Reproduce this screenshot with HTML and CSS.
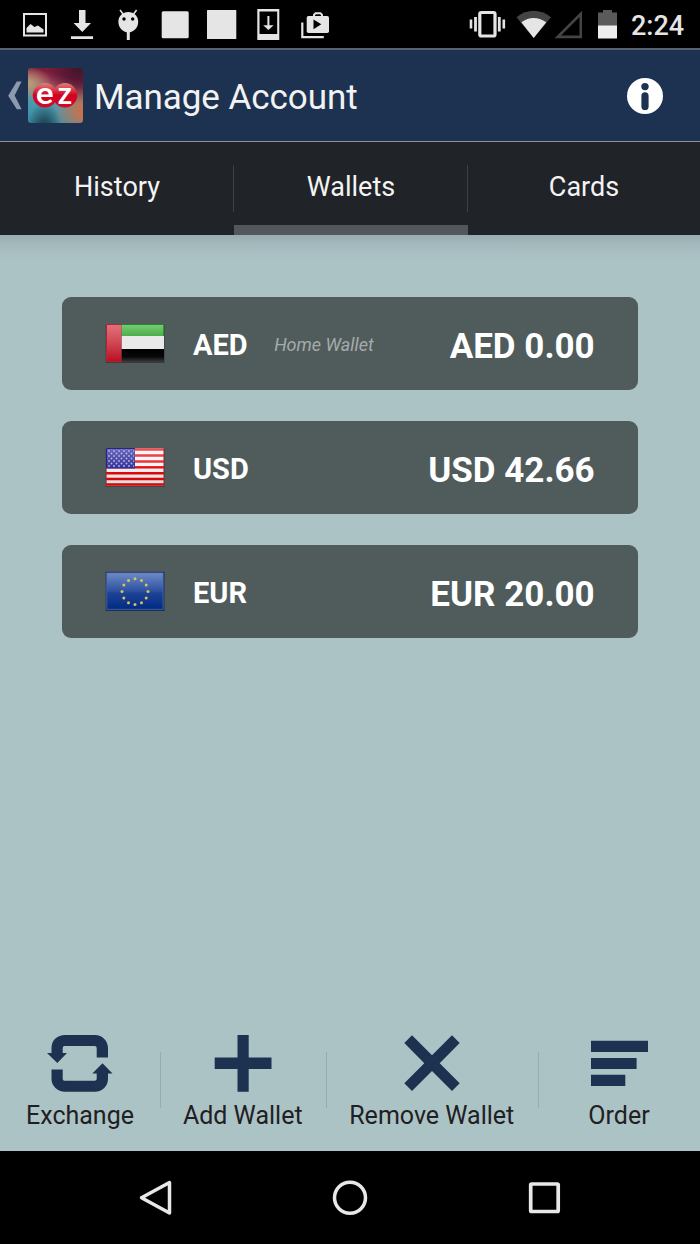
FILE: index.html
```html
<!DOCTYPE html>
<html lang="en">
<head>
<meta charset="utf-8">
<title>Manage Account</title>
<link rel="stylesheet" href="styles.css">
</head>
<body>
<div class="screen">
  <div class="status">
    <svg width="59" height="48" viewBox="0 0 59 48"><rect x="24" y="14" width="22" height="21.500" fill="none" stroke="#e5e5e5" stroke-width="2"/><path d="M26.500 32.500V28l4-4 4 3 3.500-1.500 5.500 4v3z" fill="#e5e5e5"/></svg>
    <svg width="47" height="48" viewBox="59 0 47 48"><path d="M79 10h6.500v13h5.500l-8.700 9-8.800-9H79zM71 36.200h22V39H71z" fill="#e5e5e5"/></svg>
    <svg width="44" height="48" viewBox="106 0 44 48"><path d="M128.300 12c5.600 0 9.900 4 9.900 9.700 0 6-4.400 10.600-9.900 10.600s-9.900-4.600-9.900-10.600c0-5.700 4.300-9.700 9.900-9.700z" fill="#e5e5e5"/><path d="M123 14l-3-4M133.600 14l3-4" stroke="#e5e5e5" stroke-width="1.500"/><path d="M128.300 32v8" stroke="#e5e5e5" stroke-width="3"/><circle cx="124" cy="19" r="1.700"/><circle cx="132.700" cy="19" r="1.700"/></svg>
    <svg width="48" height="48" viewBox="150 0 48 48"><rect x="161.700" y="11.200" width="27" height="27" rx="1.500" fill="#e5e5e5"/></svg>
    <svg width="49" height="48" viewBox="198 0 49 48"><rect x="207" y="10" width="29.300" height="29" rx=".5" fill="#e5e5e5"/></svg>
    <svg width="43" height="48" viewBox="247 0 43 48"><path fill-rule="evenodd" d="M257.300 9h22v31h-22zM259.500 11.500V34h17.700V11.500z" fill="#e5e5e5"/><path d="M267.400 16h2v9.300h4.200l-5.200 4.700-5.200-4.700h4.200z" fill="#e5e5e5"/></svg>
    <svg width="50" height="48" viewBox="290 0 50 48"><path d="M302.300 22.500v14.600h21.500" fill="none" stroke="#e5e5e5" stroke-width="2.200"/><rect x="306.700" y="16" width="22.300" height="17" rx="1.800" fill="#e5e5e5"/><path d="M314 17v-2.200l1.500-1.500h5l1.500 1.500V17" fill="none" stroke="#e5e5e5" stroke-width="2"/><path d="M313.500 19.500v9.700l7.800-4.900z"/></svg>
    <svg class="right" width="50" height="48" viewBox="460 0 50 48"><rect x="479.800" y="12.500" width="15.200" height="23.500" rx="1.500" fill="none" stroke="#e5e5e5" stroke-width="3.200"/><path d="M475.500 17v14.500M499.300 17v14.500" stroke="#e5e5e5" stroke-width="2.800"/><path d="M471 19.500v9M503.800 19.500v9" stroke="#e5e5e5" stroke-width="2.600"/></svg>
    <svg width="43" height="48" viewBox="510 0 43 48"><path d="M516.500 17.200Q533.500 4.500 551 17.200L533.700 38z" fill="#444"/><path d="M521.300 22.300Q533.500 13.500 546.300 22.300L533.700 38z" fill="#e5e5e5"/></svg>
    <svg width="37" height="48" viewBox="553 0 37 48"><path fill-rule="evenodd" d="M554.500 38.200L582 10.700v27.500zM561 35.600h18.500V17z" fill="#444"/></svg>
    <svg width="34" height="48" viewBox="590 0 34 48"><path d="M598 26V12.500h5V10h9v2.500h5V26z" fill="#5a5a5a"/><path d="M598 25.500h19v13h-19z" fill="#eee"/></svg>
    <span class="clock">2:24</span>
  </div>

  <header class="header">
    <svg class="back" width="28" height="92" viewBox="0 0 28 92"><path d="M16.800 31.500h4.800l-7 14 7 13.700h-4.800L8.200 45.800z" fill="#8c9aae"/></svg>
    <div class="logo"><svg width="55" height="55" viewBox="0 0 55 55">
      <defs><linearGradient id="ball" x1="0" y1="0" x2="0" y2="1"><stop offset="0" stop-color="#dc7f7c"/><stop offset=".35" stop-color="#d5283c"/><stop offset=".5" stop-color="#d0021f"/><stop offset="1" stop-color="#d3082a"/></linearGradient></defs>
      <circle cx="37" cy="27.300" r="12.200" fill="url(#ball)"/><circle cx="17" cy="27.300" r="12.200" fill="url(#ball)"/>
      <text transform="translate(16.800 35.500) scale(1.150 1)" class="logo-letter" text-anchor="middle">e</text><text x="36.700" y="35.500" class="logo-letter" text-anchor="middle">z</text>
    </svg></div>
    <h1 class="title">Manage Account</h1>
    <svg class="info" width="36" height="36" viewBox="0 0 36 36"><circle cx="18" cy="18" r="18" fill="#fff"/><circle cx="18" cy="8.600" r="3.700" fill="#1c3250"/><rect x="14.400" y="14.300" width="7.200" height="17.700" rx="3.600" fill="#1c3250"/></svg>
  </header>

  <nav class="tabs">
    <div class="tab">History</div>
    <div class="tab active">Wallets</div>
    <div class="tab">Cards</div>
  </nav>

  <main class="content">
    <div class="wallet">
      <svg class="flag" width="60" height="41" viewBox="0 0 60 41">
        <defs>
          <linearGradient id="red" x1="0" y1="0" x2="0" y2="1"><stop offset="0" stop-color="#e2717a"/><stop offset=".5" stop-color="#cf4653"/><stop offset="1" stop-color="#b90d20"/></linearGradient>
          <linearGradient id="green" x1="0" y1="0" x2="0" y2="1"><stop offset="0" stop-color="#7acb78"/><stop offset="1" stop-color="#4cae4b"/></linearGradient>
          <linearGradient id="black" x1="0" y1="0" x2="0" y2="1"><stop offset="0" stop-color="#000"/><stop offset=".6" stop-color="#080808"/><stop offset="1" stop-color="#3c3c3c"/></linearGradient>
        </defs>
        <rect x=".7" y="1" width="58.800" height="39" fill="#333d3d"/>
        <path d="M16.500 1.500H59V13H16.500z" fill="url(#green)"/><path d="M16.500 13H59v13H16.500z" fill="#e9e9e9"/><path d="M16.500 26H59v13H16.500z" fill="url(#black)"/><path d="M1 1.500h15.500V39H1z" fill="url(#red)"/>
        <path d="M16.500 1.500H58.700V13" fill="none" stroke="#208c25"/><path d="M16.500 1.500H1.500V38.700h15" fill="none" stroke="#b32435"/>
      </svg>
      <span class="code">AED</span><span class="home">Home Wallet</span><span class="amount">AED 0.00</span>
    </div>
    <div class="wallet">
      <svg class="flag" width="60" height="41" viewBox="0 0 60 41">
        <defs>
          <pattern id="stars" width="5" height="5" patternUnits="userSpaceOnUse"><circle cx="1.500" cy="1.500" r=".9" fill="#b9b9e2"/><circle cx="4" cy="4" r=".9" fill="#b9b9e2"/></pattern>
          <linearGradient id="canton" x1="0" y1="0" x2="0" y2="1"><stop offset="0" stop-color="#6a69bb"/><stop offset="1" stop-color="#30309b"/></linearGradient>
          <linearGradient id="gloss" x1="0" y1="0" x2="0" y2="1"><stop offset="0" stop-color="#fff" stop-opacity=".3"/><stop offset=".5" stop-color="#fff" stop-opacity=".12"/><stop offset=".52" stop-color="#000" stop-opacity=".02"/><stop offset="1" stop-color="#000" stop-opacity=".12"/></linearGradient>
        </defs>
        <rect x=".7" y="1" width="58.800" height="39" fill="#4b3f40"/>
        <path d="M1 1.300h58V39H1z" fill="#f5f5f5"/>
        <path d="M1 2.600h58M1 8.500h58M1 14.400h58M1 20.300h58M1 26.200h58M1 31.900h58M1 37.500h58" stroke="#e9080c" stroke-width="2.500"/>
        <path d="M1 1.300h58V39H1z" fill="url(#gloss)"/>
        <path d="M1 1.300h29V21.500H1z" fill="url(#canton)"/><path d="M2 2h27v18H2z" fill="url(#stars)"/>
        <path d="M30 1.500H1.500V21" fill="none" stroke="#292489"/><path d="M1.500 22v17M58.700 1.500V39" stroke="#b5242a" stroke-opacity=".65"/>
      </svg>
      <span class="code">USD</span><span class="amount">USD 42.66</span>
    </div>
    <div class="wallet">
      <svg class="flag" width="60" height="41" viewBox="0 0 60 41">
        <defs><linearGradient id="blue" x1="0" y1="0" x2="0" y2="1"><stop offset="0" stop-color="#6f8ac6"/><stop offset=".5" stop-color="#2c51a0"/><stop offset=".55" stop-color="#1e4395"/><stop offset="1" stop-color="#002b84"/></linearGradient></defs>
        <rect x=".7" y=".8" width="58.800" height="39.200" fill="#19305f"/>
        <path d="M1.800 1.900h56.300v36.400H1.800z" fill="url(#blue)" stroke="#5872b4" stroke-width=".7"/>
        <g fill="#d7c45a"><circle cx="30" cy="7.700" r="1.500"/><circle cx="36.500" cy="9.400" r="1.500"/><circle cx="41.200" cy="14.100" r="1.500"/><circle cx="43" cy="20.500" r="1.500"/><circle cx="41.200" cy="27" r="1.500"/><circle cx="36.500" cy="31.700" r="1.500"/><circle cx="30" cy="33.400" r="1.500"/><circle cx="23.500" cy="31.700" r="1.500"/><circle cx="18.800" cy="27" r="1.500"/><circle cx="17" cy="20.500" r="1.500"/><circle cx="18.800" cy="14.100" r="1.500"/><circle cx="23.500" cy="9.400" r="1.500"/></g>
      </svg>
      <span class="code">EUR</span><span class="amount">EUR 20.00</span>
    </div>
  </main>

  <div class="actions">
    <div class="action exchange">
      <svg width="66" height="58" viewBox="0 0 66 58"><path d="M4.500 19V14C4.500 6 10.500 1 18 1H48C55.500 1 61 7 61 14V23.500H49.700V14Q49.700 12 47.700 12H17.500Q15.700 12 15.700 14V19H20L10.300 29 0 19zM4.500 35.500H15.700V45Q15.700 46.700 17.500 46.700H47.700Q49.700 46.700 49.700 45V39.500H45.300L55.500 29.300 65.500 39.500H61V45C61 52 55.500 57.700 48 57.700H18C10.500 57.700 4.500 52 4.500 45z" fill="#1c3250"/></svg>
      <span>Exchange</span>
    </div>
    <div class="action add">
      <svg width="58" height="58" viewBox="0 0 58 58"><path d="M23.500 1H34.700V23.500H57.500V35H34.700V57.700H23.500V35H.7V23.500H23.500z" fill="#1c3250"/></svg>
      <span>Add Wallet</span>
    </div>
    <div class="action remove">
      <svg width="58" height="58" viewBox="0 0 58 58"><path d="M9 1.200L29 21.300 49 1.200 56.700 9 36.700 29.200 56.700 49.300 49 57 29 37 9 57 1.300 49.300 21.300 29.200 1.300 9z" fill="#1c3250"/></svg>
      <span>Remove Wallet</span>
    </div>
    <div class="action order">
      <svg width="58" height="58" viewBox="0 0 58 58"><path d="M1 6.700H58V18H1zM1 24H46.600V35H1zM1 40.700H35.300V52H1z" fill="#1c3250"/></svg>
      <span>Order</span>
    </div>
  </div>

  <div class="navbar">
    <svg width="40" height="40" viewBox="0 0 40 40"><path d="M33.500 4.500V35L5.500 19.700z" fill="none" stroke="#e8e8e8" stroke-width="3.500" stroke-linejoin="round"/></svg>
    <svg width="40" height="40" viewBox="0 0 40 40"><circle cx="20" cy="19.700" r="15.500" fill="none" stroke="#e8e8e8" stroke-width="3.500"/></svg>
    <svg width="40" height="40" viewBox="0 0 40 40"><rect x="6.700" y="6" width="27.500" height="27.500" rx="1" fill="none" stroke="#e8e8e8" stroke-width="3.700"/></svg>
  </div>
</div>
</body>
</html>
```

FILE: styles.css
```css
* { box-sizing: border-box; }
body { margin: 0; font-family: Roboto, "Liberation Sans", sans-serif; }
svg { display: block; flex: none; }

.screen {
  width: 700px;
  height: 1244px;
  display: flex;
  flex-direction: column;
  background: #acc3c6;
  overflow: hidden;
}

.status { height: 48px; display: flex; background: #000; }
.right { margin-left: 120px; }
.clock {
  margin-left: 7px;
  padding-top: 2px;
  line-height: 48px;
  font-size: 27px;
  font-weight: 500;
  color: #e5e5e5;
  white-space: nowrap;
}

.header {
  height: 94px;
  display: flex;
  align-items: center;
  background: #1c3250;
  border-top: 2px solid #586370;
  border-bottom: 1px solid #8b93a0;
  padding-right: 37px;
}
.logo {
  width: 55px;
  height: 55px;
  border-radius: 3px;
  overflow: hidden;
  background:
    radial-gradient(ellipse at 90% 0%, #43142c 0%, rgba(80, 20, 48, 0) 45%),
    radial-gradient(ellipse at 30% 112%, #16323f 0%, rgba(22, 50, 63, 0) 32%),
    radial-gradient(ellipse at 108% 80%, #c8714b 8%, rgba(190, 108, 78, 0) 42%),
    radial-gradient(ellipse at 0% 28%, #b9a078 0%, rgba(180, 150, 115, 0) 30%),
    linear-gradient(195deg, #7d1d3e 18%, #a1475a 34%, #8b7a80 46%, #4b9caf 66%, #3a8aa2 100%);
}
.logo-letter { font: 500 29px Roboto, sans-serif; fill: #fff; }
.title {
  margin: 0 auto 0 11px;
  padding-top: 3px;
  font-size: 35px;
  font-weight: 400;
  letter-spacing: -0.05px;
  color: #f2f2f2;
  white-space: nowrap;
}

.tabs { height: 93px; display: grid; grid-template-columns: 234px 234px 232px; background: #202328; }
.tab {
  line-height: 91px;
  height: 93px;
  font-size: 27px;
  text-align: center;
  color: #f4f4f4;
  background: linear-gradient(#3c3f43, #3c3f43) right 23px / 1px 47px no-repeat;
}
.tab:last-child { background: none; }
.active { box-shadow: inset 0 -10px #53575b; }

.content {
  flex: 1;
  display: flex;
  flex-direction: column;
  gap: 31px;
  padding: 62.300px 62.300px 0;
  background: linear-gradient(#98abae, #a4b9bd 9px, #acc3c6 24px);
}
.wallet {
  height: 93px;
  display: flex;
  align-items: center;
  padding: 3px 43px 0;
  border-radius: 9px;
  background: #505b5b;
  color: #fff;
  white-space: nowrap;
}
.flag { margin-bottom: 3px; }
.code { margin-left: 27.700px; font-size: 29px; font-weight: 700; }
.home { margin: 0 0 2px 26.500px; font-size: 18px; font-style: italic; color: #a5abab; }
.amount { margin-left: auto; padding-top: 2px; font-size: 35px; font-weight: 700; }

.actions {
  height: 137px;
  display: grid;
  grid-template-columns: 161px 165.500px 212.500px 161px;
  padding-top: 20px;
}
.action {
  display: flex;
  flex-direction: column;
  align-items: center;
  padding-right: 2px;
  font-size: 25px;
  color: #1f2022;
  white-space: nowrap;
  background: linear-gradient(#98abae, #98abae) right 18px / 1px 56px no-repeat;
}
.action span { margin-top: 9px; line-height: 30px; }
.exchange { padding-right: 1px; }
.order { padding-right: 1px; background: none; }

.navbar {
  height: 93px;
  display: flex;
  justify-content: space-between;
  padding: 26.500px 136px 0;
  background: #000;
}
```
